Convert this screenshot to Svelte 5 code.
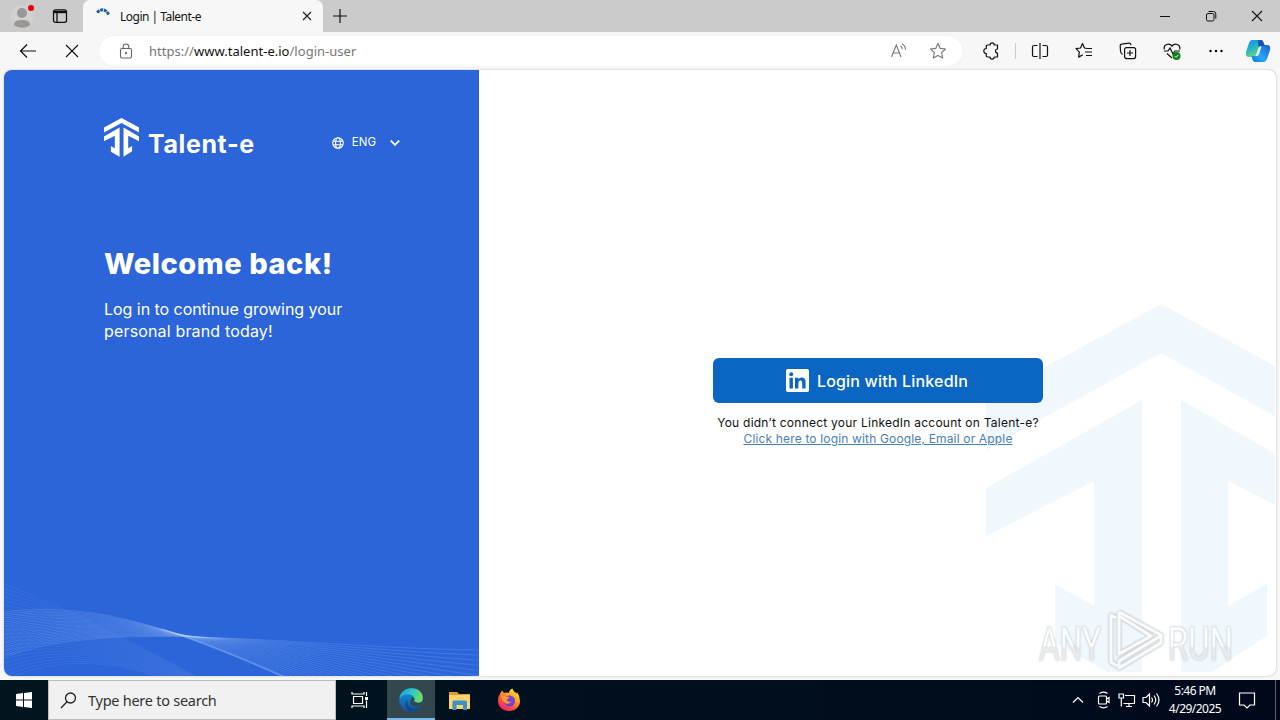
<script>
  const mark =
    'M175 0 350 95V146L175 49 0 146V95ZM156 96V388L69 338V280L108 302V177L0 232V184ZM195 96V388L281 332V280L242 302V177L350 232V184Z';
  const steps = Array.from({ length: 24 }, (_, i) => i / 23);
  const ribbon = steps.map(
    (t) => `M0 ${42 + 46 * t}C${122 - 22 * t} ${27 + 19 * t} ${222 + 78 * t} ${78} 475 ${80 + 118 * (1 - t)}`
  );
  const fan = steps.map((t) => `M0 ${14 + 96 * t}Q${65 + 20 * t} ${38 + 34 * t} ${195 - 10 * t} ${108 + 12 * t}`);
</script>

<div class="desktop">
  <div class="tabs">
    <div class="tools">
      <svg class="person" width="26" height="26" viewBox="0 0 26 26"><circle cx="13" cy="14" r="11.500" fill="#d3d0ce"/><circle cx="13" cy="10" r="5" fill="#989898"/><path d="M5 22c0-4 3-5 8-5s8 1 8 5c-4 3.500-12 3.500-16 0Z" fill="#989898"/><circle cx="22" cy="5" r="3" fill="#e3000f"/></svg>
      <svg width="16" height="16" viewBox="0 0 16 16" fill="none" stroke="#111" stroke-width="1.300"><rect x="1.500" y="1.800" width="13" height="12.500" rx="2"/><path d="M2 4h12" stroke-width="2.400"/><path d="M5 4v10"/></svg>
    </div>
    <div class="tab">
      <svg width="16" height="16" viewBox="0 0 16 16"><path d="M1 4.500Q8-2 13 7" fill="none" stroke="#21639a" stroke-width="3" stroke-dasharray="3 .8"/></svg>
      <span class="tabname">Login | Talent-e</span>
      <svg width="10" height="10" viewBox="0 0 10 10" stroke="#222" stroke-width="1.200"><path d="m1 1 8 8m0-8-8 8"/></svg>
    </div>
    <svg class="plus" width="14" height="14" viewBox="0 0 14 14" stroke="#111" stroke-width="1.200"><path d="M0 7h14M7 0v14"/></svg>
    <div class="controls">
      <svg width="12" height="12" viewBox="0 0 12 12"><path d="M1 6.500h10" stroke="#111"/></svg>
      <svg width="12" height="12" viewBox="0 0 12 12" fill="none" stroke="#111"><rect x="1.500" y="3.500" width="7.500" height="7.500" rx="1.500"/><path d="M3.500 1.500H8.500Q10.800 1.500 10.800 4V8.500"/></svg>
      <svg width="12" height="12" viewBox="0 0 12 12" stroke="#111" stroke-width="1.100"><path d="m1 1 10 10m0-10L1 11"/></svg>
    </div>
  </div>

  <div class="toolbar">
    <div class="nav">
      <svg width="18" height="16" viewBox="0 0 18 16" fill="none" stroke="#111" stroke-width="1.200"><path d="M17 8H1.500M8 1.500 1.500 8 8 14.500"/></svg>
      <svg width="14" height="14" viewBox="0 0 14 14" stroke="#111" stroke-width="1.100"><path d="m1 1 12 12m0-12L1 13"/></svg>
    </div>
    <div class="address">
      <svg width="14" height="16" viewBox="0 0 14 16" fill="none" stroke="#666" stroke-width="1.100"><rect x="1.500" y="5.500" width="11" height="9.500" rx="1.500"/><path d="M4.200 5.500V3.800a2.800 2.800 0 0 1 5.600 0v1.700"/><circle cx="7" cy="10.200" r=".6" fill="#666"/></svg>
      <span class="url">https://<b>www.talent-e.io</b>/login-user</span>
      <svg width="16" height="16" viewBox="0 0 16 16" fill="none" stroke="#777" stroke-width="1.100"><path d="M.5 14 5.300 2 10 14M2.200 10h6.200M9.500 2.800q1.800 1.200 1.800 3.500M11 .8q3.500 2 3.500 6"/></svg>
      <svg class="star" width="18" height="18" viewBox="0 0 18 18" fill="none" stroke="#777" stroke-width="1.100" stroke-linejoin="round"><path d="m9 1.500 2.300 4.900 5.200.6-3.900 3.700 1.100 5.300L9 13.400 4.300 16l1.100-5.300L1.500 7l5.200-.6Z"/></svg>
    </div>
    <div class="extras">
      <svg width="18" height="18" viewBox="0 0 18 18" fill="none" stroke="#111" stroke-width="1.200" stroke-linejoin="round"><path d="M5.500 3H8a2.100 2.100 0 0 1 4.200 0h3.300v4a2 2 0 0 0 0 4v4h-3.300a2.100 2.100 0 0 1-4.200 0H5.500Q4.300 15 4.300 13.800V11.500a2.300 2.300 0 0 1 0-5V4.200Q4.300 3 5.500 3Z"/></svg>
      <i class="divider"></i>
      <svg width="18" height="18" viewBox="0 0 18 18" fill="none" stroke="#111" stroke-width="1.200"><path d="M6.500 3.500H3Q1.500 3.500 1.500 5v8Q1.500 14.500 3 14.500H6.500M11.500 3.500H15q1.500 0 1.500 1.500v8q0 1.500-1.500 1.500h-3.500M9 1v16"/></svg>
      <svg width="18" height="18" viewBox="0 0 18 18" fill="none" stroke="#111" stroke-width="1.200" stroke-linejoin="round"><path d="M12 6.500 9.500 6 7.500 1.500 5.500 6 1 6.700l3.400 3.400-.8 5 4.200-2.300M12 6.500h5M10 10h7M11 13.500h6"/></svg>
      <svg width="18" height="18" viewBox="0 0 18 18" fill="none" stroke="#111" stroke-width="1.200"><rect x="5.600" y="5.600" width="11" height="11" rx="2"/><path d="M11 8v6M8 11h6M3.500 12.500Q1.700 11 1.500 9L1.200 4Q1 2.500 2.500 2.200L10 1.200q1.800-.2 2 2"/></svg>
      <svg width="18" height="18" viewBox="0 0 18 18" fill="none" stroke="#111" stroke-width="1.200"><path d="M1.300 7.500C.3 2.500 6 .5 9 4c3-3.500 8.700-1.500 7.700 3.500M4 11.500 9 16M1 9h4l2-3 3 6 2-3h5"/><circle cx="13.500" cy="14" r="4" fill="#11801a" stroke="none"/><path d="m11.800 14.200 1.200 1.200 2.400-2.600" stroke="#fff" stroke-width="1"/></svg>
      <svg width="18" height="18" viewBox="0 0 18 18"><circle cx="3.500" cy="9" r="1.200"/><circle cx="9" cy="9" r="1.200"/><circle cx="14.500" cy="9" r="1.200"/></svg>
      <svg width="26" height="24" viewBox="0 0 26 24"><defs><linearGradient id="ca" x2=".5" y2="1"><stop stop-color="#128ee8"/><stop offset=".45" stop-color="#20b1cf"/><stop offset="1" stop-color="#67d97a"/></linearGradient><linearGradient id="cb" x1="1" x2="0" y2="1"><stop stop-color="#205bd2"/><stop offset=".6" stop-color="#27a8f4"/><stop offset="1" stop-color="#146ee0"/></linearGradient></defs><path d="M7 1h9q2 0 3 4l1 2h-4q-2 0-3 3l-2 6q-1 2-3 2H4q-4 0-3-5L4 4q1-3 3-3Z" fill="url(#ca)"/><path d="M19 23h-9q-2 0-3-4l-.5-2H10q2 0 3-3l2-6q1-2 3-2h4q4 0 3 5l-3 9q-1 3-3 3Z" fill="url(#cb)"/><path d="M13 1h3q2 0 3 4l1 2h-4q-2 0-2.500 1Z" fill="#1351b8"/><path d="m10 17 1.500-1q2-2 3-8l2-.8-2.500 8q-1 2-3 1.800Z" fill="#f1fcff"/></svg>
    </div>
  </div>

  <div class="viewport">
    <main class="page">
      <aside>
        <header>
          <div class="brand">
            <svg width="35" height="39" viewBox="0 0 350 390"><path d={mark} fill="#fff"/></svg>
            <span>Talent-e</span>
          </div>
          <div class="language">
            <svg width="12" height="12" viewBox="0 0 12 12" fill="none" stroke="#fff" stroke-width="1.100"><circle cx="6" cy="6" r="5.300"/><ellipse cx="6" cy="6" rx="2.400" ry="5.300"/><path d="M1 4.200h10M1 7.800h10"/></svg>
            <span>ENG</span>
            <svg width="10" height="6" viewBox="0 0 10 6" fill="none" stroke="#fff" stroke-width="1.800"><path d="m.8.6L5 4.800 9.200.6"/></svg>
          </div>
        </header>
        <h1>Welcome back!</h1>
        <p>Log in to continue growing your<br><span>personal brand today!</span></p>
        <svg class="waves" width="475" height="106" viewBox="0 0 475 106" fill="none" stroke="#bcd8ff">
          <g stroke-opacity=".13" stroke-width=".7">{#each fan as d}<path {d}/>{/each}</g>
          <g stroke-opacity=".27" stroke-width=".6">{#each ribbon as d}<path {d}/>{/each}</g>
          <path d={ribbon[0]} stroke-opacity=".3" stroke-dasharray="0 160 400" stroke-width="1.800"/>
        </svg>
      </aside>
      <section>
        <svg class="backdrop" width="289" height="368" viewBox="0 0 289 368"><path d={mark} fill="#f0f8fe"/></svg>
        <div class="login">
          <button>
            <svg width="23" height="23" viewBox="0 0 23 23"><rect width="23" height="23" rx="1.800" fill="#fff"/><g fill="#0a66c2"><circle cx="5.200" cy="5.200" r="2"/><path d="M3.500 8.700h3.400v10.800H3.500ZM9 8.700h3.300v1.500q1-1.800 3.300-1.800 4 0 4 4.800v6.300h-3.400v-5.600q0-2.600-1.800-2.600-2 0-2 2.600v5.600H9Z"/></g></svg>
            <span>Login with LinkedIn</span>
          </button>
          <div class="question">You didn’t connect your LinkedIn account on Talent-e?</div>
          <a href="#login">Click here to login with Google, Email or Apple</a>
        </div>
      </section>
    </main>
    <svg class="anyrun" width="240" height="76" viewBox="0 0 240 76">
      <defs><linearGradient id="fade" x2="0" y2="1"><stop stop-color="#fff"/><stop offset=".54" stop-color="#fff"/><stop offset=".58" stop-color="#e6e9eb"/><stop offset="1" stop-color="#e6e9eb"/></linearGradient></defs>
      <g fill="url(#fade)" class="letters"><text x="3" y="53" textLength="62" lengthAdjust="spacingAndGlyphs">ANY</text><text x="132" y="53" textLength="65" lengthAdjust="spacingAndGlyphs">RUN</text></g>
      <g fill="none" stroke-linejoin="round" class="play"><path d="M80 11 75 8v47l6 4M83 5v42l32-18L83 9M126 28 83 54v7l42-25V28L83 5" stroke="#d2d6d9" stroke-width="4.600"/><path d="M80 11 75 8v47l6 4M83 5v42l32-18L83 9M126 28 83 54v7l42-25V28L83 5" stroke="#fafbfc" stroke-width="3"/></g>
    </svg>
  </div>

  <div class="taskbar">
    <div class="start"><svg width="16" height="16" viewBox="0 0 16 16" fill="#fff"><path d="m0 2 7-1v6.500H0ZM8 .9 16 0v7.500H8ZM0 8.500h7V15l-7-1ZM8 8.500h8V16l-8-.9Z"/></svg></div>
    <div class="search">
      <svg width="17" height="17" viewBox="0 0 17 17" fill="none" stroke="#222" stroke-width="1.300"><circle cx="10.500" cy="6" r="5"/><path d="M7 9.700 1 16"/></svg>
      <span>Type here to search</span>
    </div>
    <div class="app"><svg width="18" height="18" viewBox="0 0 18 18" fill="none" stroke="#fff" stroke-width="1.200"><path d="M2.500 5.500h9v7h-9ZM1 1v2h12V1M1 17v-2h12v2M15.500 1v4M15.500 9.500V17"/><path d="M14 6h3v3h-3Z" fill="#fff" stroke="none"/></svg></div>
    <div class="app active"><svg width="24" height="24" viewBox="0 0 24 24"><defs><linearGradient id="ea" x2="1" y2=".3"><stop stop-color="#229bdc"/><stop offset=".55" stop-color="#2fc5c9"/><stop offset="1" stop-color="#6bdc67"/></linearGradient><linearGradient id="eb" x2="0" y2="1"><stop stop-color="#1499dc"/><stop offset="1" stop-color="#1253a7"/></linearGradient></defs><circle cx="12" cy="12" r="11.700" fill="url(#eb)"/><path d="M.5 11C1-3 24-3 23.800 10c0 5-5 6-8.800 4.300-1.300-.6.6-1.300.4-3.300C14.800 5 4 4.500.5 11Z" fill="url(#ea)"/><path d="M9.500 10.500c-4 4 1 10.500 7 9.500 3-.5 4.500-2 5-1.800-1.500 3-5 5.300-8.500 5.500-7-.5-9-9-3.500-13.200Z" fill="#114a8c"/><path d="M13.500 9q3 1.500 1.500 4 3 3 8 1l-1.500 3.500q-5 3-9.500-.5-2-4 1.500-8Z" fill="#33474e"/><path d="M22.500 15.500 24 13v8h-3Z" fill="#33474e"/></svg></div>
    <div class="app folder"><svg width="22" height="19" viewBox="0 0 22 19"><path d="M0 1h8l2 2h11v15H0Z" fill="#dca12c"/><path d="M0 4h21v14H0Z" fill="#ffd36b"/><path d="M3.500 11q0-1.500 1.500-1.500h11.500q1.500 0 1.500 1.500v8h-4v-5H7.500v5h-4Z" fill="#3b91cc"/></svg></div>
    <div class="app firefox"><svg width="24" height="24" viewBox="0 0 24 24"><defs><linearGradient id="fx" x1="1" y1="0" x2=".3" y2="1"><stop stop-color="#fff24a"/><stop offset=".4" stop-color="#ffab20"/><stop offset=".7" stop-color="#ff583e"/><stop offset="1" stop-color="#ee216b"/></linearGradient></defs><path d="M3.500 5 5 2.500 7 5q3-1 5 0 0-3 3.500-4.500.5 3 4 5L20 4q3 4 3 9c0 6-5 10-11 10S1 19 1 13q0-5 2.500-8Z" fill="url(#fx)"/><circle cx="12.500" cy="13" r="5.500" fill="#7542d6"/><path d="M4 8q3-1.500 5 .7h3.500Q12 11 9.500 11.500q1 3 5 2-2 3-5.500 2-4-2-5-7.500Z" fill="#ff982b"/></svg></div>
    <div class="tray">
      <svg class="chevron" width="12" height="8" viewBox="0 0 12 8" fill="none" stroke="#fff" stroke-width="1.200"><path d="m1 6.500 5-5 5 5"/></svg>
      <svg class="camera" width="14" height="18" viewBox="0 0 14 18" fill="none" stroke="#fff" stroke-width="1.200"><rect x="1.500" y="5" width="8" height="8" rx="1"/><path d="m9.500 8 2.500-1.500v5L9.500 10M2.500 2.500Q6.500-.2 10.500 2.500M2.500 15.500Q6.500 18.200 10.500 15.500"/></svg>
      <svg width="18" height="16" viewBox="0 0 18 16" fill="none" stroke="#fff" stroke-width="1.200"><path d="M7 3.500h9.500v8h-11M8 14.500h6M11 11.500v3M1 2h4.500v4H1ZM3.300 6v8.500"/></svg>
      <svg class="speaker" width="18" height="16" viewBox="0 0 18 16" fill="none" stroke="#fff" stroke-width="1.200"><path d="M1 5.500h3L7.500 2v12L4 10.500H1ZM9.500 5.500q2 2.500 0 5M12 3.500q3.500 4.500 0 9M14.500 1.500q5 6.500 0 13"/></svg>
      <div class="clock"><span>5:46 PM</span><span>4/29/2025</span></div>
      <svg class="note" width="18" height="18" viewBox="0 0 18 18" fill="none" stroke="#fff" stroke-width="1.200"><path d="M1.500 2h15v12H12l-3 3-3-3H1.500Z"/></svg>
      <i class="peek"></i>
    </div>
  </div>
</div>

<style>
  :global(body) { margin: 0; overflow: hidden; }
  .desktop { width: 1280px; height: 720px; display: grid; grid-template-rows: 32px 38px 610px 40px; background: #f7f7f7; font-family: "Noto Sans", sans-serif; color: #111; }
  svg { display: block; flex: none; }
  .tabs { background: #cbcbcb; display: flex; align-items: center; }
  .tools { width: 83px; height: 32px; box-sizing: border-box; padding-left: 9px; display: flex; align-items: center; gap: 17px; }
  .tab { width: 240px; height: 32px; box-sizing: border-box; padding: 0 11px 0 13px; display: flex; align-items: center; background: #f7f7f7; border-radius: 7px 7px 0 0; }
  .tabname { flex: 1; margin-left: 8px; font-size: 12px; letter-spacing: -.5px; }
  .plus { margin-left: 10px; }
  .controls { margin-left: auto; margin-right: 17px; display: flex; gap: 34px; }
  .toolbar { display: flex; align-items: center; background: #f7f7f7; }
  .nav { width: 99px; box-sizing: border-box; padding-left: 19px; display: flex; gap: 28px; align-items: center; }
  .address { width: 864px; height: 30px; box-sizing: border-box; border-radius: 15px; background: #fff; display: flex; align-items: center; padding: 0 16px 0 20px; box-shadow: 0 0 1px #ddd; }
  .url { flex: 1; margin-left: 16px; font-size: 13px; color: #777; letter-spacing: .02px; }
  .url b { font-weight: 400; color: #111; }
  .star { margin-left: 22px; }
  .extras { flex: 1; display: flex; align-items: center; padding-left: 19px; gap: 26px; }
  .divider { width: 1px; height: 16px; background: #ccc; margin: 0 -11px; }
  .extras svg:last-child { margin-left: -6px; }
  .viewport { position: relative; padding: 0 4px 4px; }
  .page { height: 606px; display: flex; border-radius: 8px; overflow: hidden; background: #fff; box-shadow: 0 0 2px #aaa; }
  aside { position: relative; width: 475px; height: 606px; box-sizing: border-box; padding: 48px 79px 0 100px; background: #2b65d9; color: #fff; font-family: Inter, sans-serif; }
  header { height: 40px; display: flex; justify-content: space-between; }
  .brand { display: flex; }
  .brand span { margin: 9px 0 0 9px; font: 700 25px/34px Inter, sans-serif; letter-spacing: .6px; }
  .language { display: flex; align-items: center; font-size: 11.500px; height: 48px; }
  .language svg { margin-top: 1px; }
  .language span { margin: 0 14px 0 8px; }
  h1 { margin: 85px 0 0; font-size: 29px; line-height: 42px; font-weight: 800; letter-spacing: .55px; white-space: nowrap; }
  p { margin: 13px 0 0; font-size: 16px; line-height: 22px; white-space: nowrap; letter-spacing: -.04px; }
  p span { letter-spacing: .16px; }
  .waves { position: absolute; left: 0; bottom: 0; }
  section { position: relative; flex: 1; }
  .backdrop { position: absolute; left: 507px; top: 234px; }
  .login { position: relative; width: 330px; margin: 288px 0 0 234px; text-align: center; font: 12px/16px Inter, sans-serif; white-space: nowrap; }
  button { width: 330px; height: 45px; padding: 0 2px 0 0; border: 0; border-radius: 6px; background: #0a66c2; color: #fff; display: flex; align-items: center; justify-content: center; gap: 8px; font: 500 16px Inter, sans-serif; letter-spacing: .18px; }
  .question { margin-top: 12px; letter-spacing: .24px; color: #111; }
  a { display: block; color: #4781ba; letter-spacing: .16px; text-decoration: underline; }
  .anyrun { position: absolute; left: 1036px; top: 537px; filter: drop-shadow(0 0 1px #bfc3c5); opacity: .85; }
  .letters text { font: 400 47px Roboto, sans-serif; stroke: #dde0e3; stroke-width: .6px; }
  .taskbar { display: flex; background: linear-gradient(90deg, #02151f, #00091a); color: #fff; }
  .start, .app { width: 48px; display: flex; align-items: center; justify-content: center; }
  .search { width: 288px; box-sizing: border-box; padding-left: 11px; background: #f1f1f1; border: 1px solid #bdbdc0; color: #333; display: flex; align-items: center; font-size: 14.500px; }
  .search span { margin-left: 11px; letter-spacing: -.26px; }
  .active { margin-left: 3px; background: #33474e; box-shadow: inset 0 -2px #76b9ed; }
  .folder, .firefox { width: 49px; }
  .tray { margin-left: auto; display: flex; align-items: center; }
  .tray > svg { margin-right: 6px; }
  .tray .chevron { margin-right: 13px; }
  .tray .camera { margin-right: 7px; }
  .tray .speaker { margin-right: 8px; }
  .clock { display: flex; flex-direction: column; align-items: center; width: 54px; font-size: 12px; line-height: 18px; letter-spacing: -.52px; }
  .tray .note { margin: 0 19px 0 16px; }
  .peek { width: 4px; height: 40px; border-left: 1px solid #5c6470; }
</style>
